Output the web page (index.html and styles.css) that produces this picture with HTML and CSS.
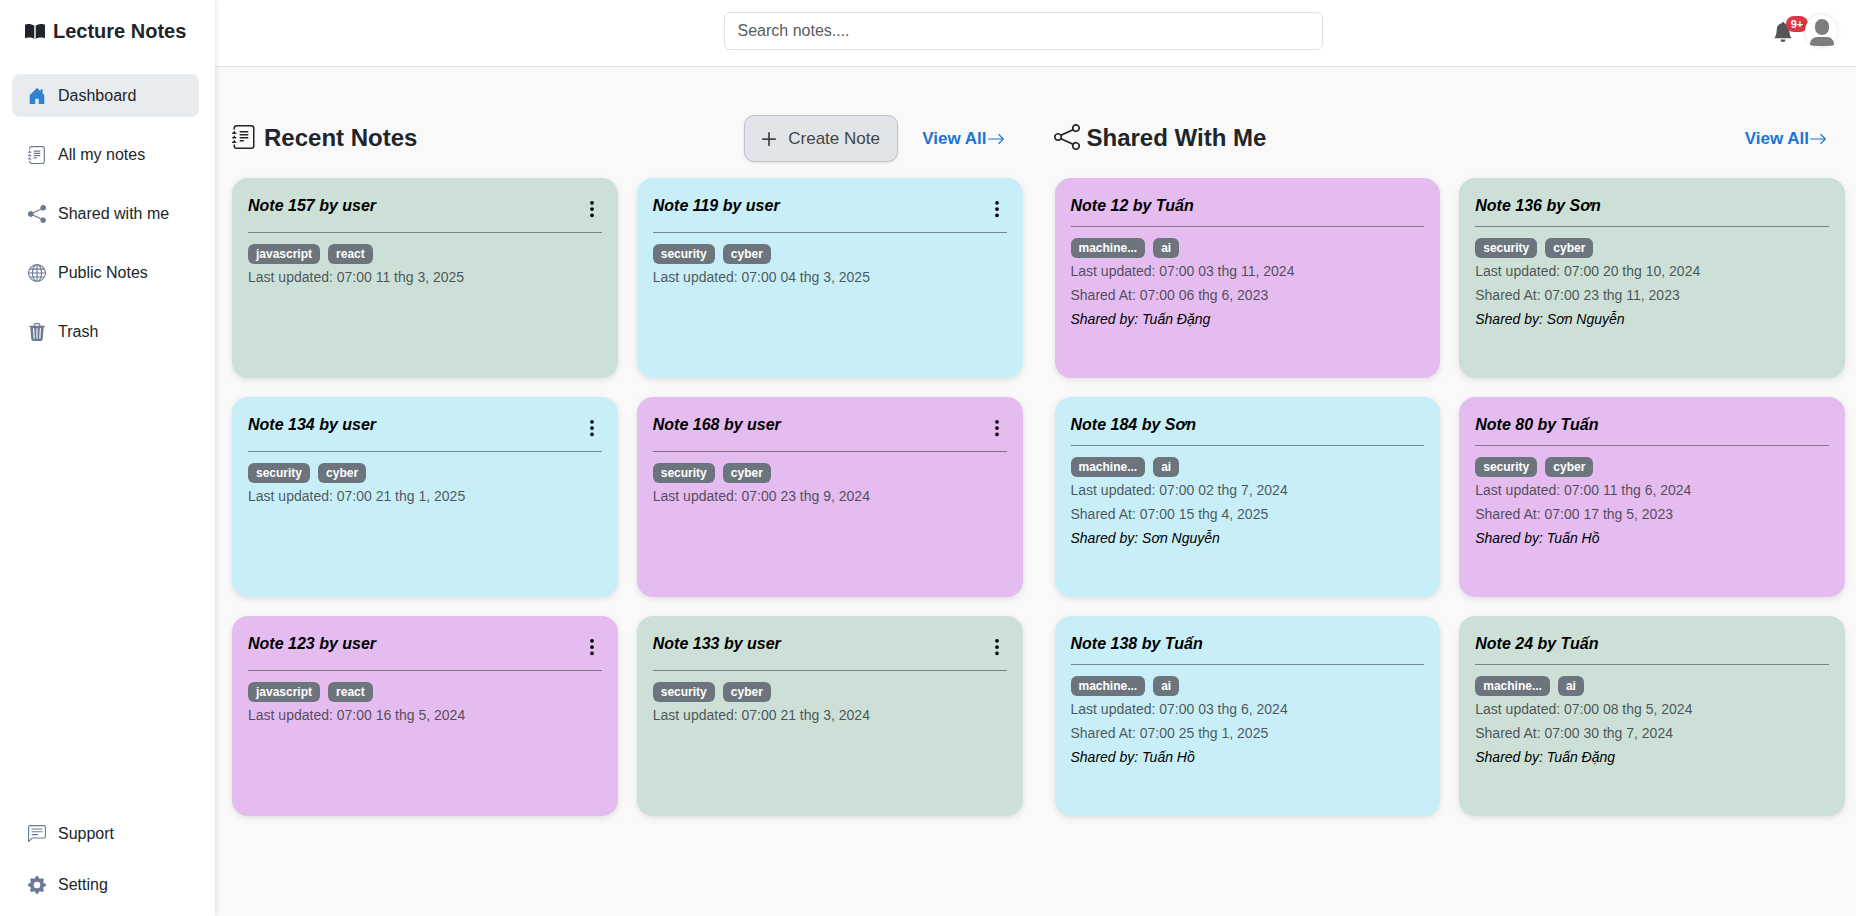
FILE: index.html
```html
<!DOCTYPE html>
<html>
<head>
    <meta charset="utf-8" />
    <title>Lecture Notes</title>
    <link rel="stylesheet" href="styles.css">
</head>
<body>
    <svg class="icon-defs" xmlns="http://www.w3.org/2000/svg">
        <symbol id="i-book" viewBox="0 0 20 15"><path d="M9.3 1.6C7.8.5 5.5 0 3.4 0 2 0 .8.3 0 .7v13.6c1-.5 2.2-.8 3.6-.8 2.2 0 4.3.5 5.7 1.4z"/><path d="M10.7 1.6C12.2.5 14.5 0 16.6 0c1.4 0 2.6.3 3.4.7v13.6c-1-.5-2.2-.8-3.6-.8-2.2 0-4.3.5-5.7 1.4z"/></symbol>
        <symbol id="i-house" viewBox="0 0 16 16"><path d="M6.5 14.5v-3.505c0-.245.25-.495.5-.495h2c.25 0 .5.25.5.5v3.5a.5.5 0 0 0 .5.5h4a.5.5 0 0 0 .5-.5v-7a.5.5 0 0 0-.146-.354L13 5.793V2.5a.5.5 0 0 0-.5-.5h-1a.5.5 0 0 0-.5.5v1.293L8.354 1.146a.5.5 0 0 0-.708 0l-6 6A.5.5 0 0 0 1.5 7.5v7a.5.5 0 0 0 .5.5h4a.5.5 0 0 0 .5-.5"/></symbol>
        <symbol id="i-journal" viewBox="0 0 16 16"><path d="M5 10.5a.5.5 0 0 1 .5-.5h2a.5.5 0 0 1 0 1h-2a.5.5 0 0 1-.5-.5m0-2a.5.5 0 0 1 .5-.5h5a.5.5 0 0 1 0 1h-5a.5.5 0 0 1-.5-.5m0-2a.5.5 0 0 1 .5-.5h5a.5.5 0 0 1 0 1h-5a.5.5 0 0 1-.5-.5m0-2a.5.5 0 0 1 .5-.5h5a.5.5 0 0 1 0 1h-5a.5.5 0 0 1-.5-.5"/><path d="M3 0h10a2 2 0 0 1 2 2v12a2 2 0 0 1-2 2H3a2 2 0 0 1-2-2v-1h1v1a1 1 0 0 0 1 1h10a1 1 0 0 0 1-1V2a1 1 0 0 0-1-1H3a1 1 0 0 0-1 1v1H1V2a2 2 0 0 1 2-2"/><path d="M1 5v-.5a.5.5 0 0 1 1 0V5h.5a.5.5 0 0 1 0 1h-2a.5.5 0 0 1 0-1zm0 3v-.5a.5.5 0 0 1 1 0V8h.5a.5.5 0 0 1 0 1h-2a.5.5 0 0 1 0-1zm0 3v-.5a.5.5 0 0 1 1 0v.5h.5a.5.5 0 0 1 0 1h-2a.5.5 0 0 1 0-1z"/></symbol>
        <symbol id="i-share-fill" viewBox="0 0 16 16"><path d="M11 2.5a2.5 2.5 0 1 1 .603 1.628l-6.718 3.12a2.5 2.5 0 0 1 0 1.504l6.718 3.12a2.5 2.5 0 1 1-.488.876l-6.718-3.12a2.5 2.5 0 1 1 0-3.256l6.718-3.12A2.5 2.5 0 0 1 11 2.5"/></symbol>
        <symbol id="i-share" viewBox="0 0 16 16"><path d="M13.5 1a1.5 1.5 0 1 0 0 3 1.5 1.5 0 0 0 0-3M11 2.5a2.5 2.5 0 1 1 .603 1.628l-6.718 3.12a2.5 2.5 0 0 1 0 1.504l6.718 3.12a2.5 2.5 0 1 1-.488.876l-6.718-3.12a2.5 2.5 0 1 1 0-3.256l6.718-3.12A2.5 2.5 0 0 1 11 2.5m-8.5 4a1.5 1.5 0 1 0 0 3 1.5 1.5 0 0 0 0-3m11 5.5a1.5 1.5 0 1 0 0 3 1.5 1.5 0 0 0 0-3"/></symbol>
        <symbol id="i-globe" viewBox="0 0 16 16"><path d="M0 8a8 8 0 1 1 16 0A8 8 0 0 1 0 8m7.5-6.923c-.67.204-1.335.82-1.887 1.855A8 8 0 0 0 5.145 4H7.5zM4.09 4a9.3 9.3 0 0 1 .64-1.539 7 7 0 0 1 .597-.933A7.03 7.03 0 0 0 2.255 4zm-.582 3.5c.03-.877.138-1.718.312-2.5H1.674a7 7 0 0 0-.656 2.5zM4.847 5a12.5 12.5 0 0 0-.338 2.5H7.5V5zM8.5 5v2.5h2.99a12.5 12.5 0 0 0-.337-2.5zM4.51 8.5a12.5 12.5 0 0 0 .337 2.5H7.5V8.5zm3.99 0V11h2.653c.187-.765.306-1.608.338-2.5zM5.145 12q.208.58.468 1.068c.552 1.035 1.218 1.65 1.887 1.855V12zm.182 2.472a7 7 0 0 1-.597-.933A9.3 9.3 0 0 1 4.09 12H2.255a7 7 0 0 0 3.072 2.472M3.82 11a13.7 13.7 0 0 1-.312-2.5h-2.49c.062.89.291 1.733.656 2.5zm6.853 3.472A7 7 0 0 0 13.745 12H11.91a9.3 9.3 0 0 1-.64 1.539 7 7 0 0 1-.597.933M8.5 12v2.923c.67-.204 1.335-.82 1.887-1.855q.26-.487.468-1.068zm3.68-1h2.146c.365-.767.594-1.61.656-2.5h-2.49a13.7 13.7 0 0 1-.312 2.5m2.802-3.5a7 7 0 0 0-.656-2.5H12.18c.174.782.282 1.623.312 2.5zM11.27 2.461c.247.464.462.98.64 1.539h1.835a7 7 0 0 0-3.072-2.472c.218.284.418.598.597.933M10.855 4a8 8 0 0 0-.468-1.068C9.835 1.897 9.17 1.282 8.5 1.077V4z"/></symbol>
        <symbol id="i-trash" viewBox="0 0 16 16"><path d="M11 1.5v1h3.5a.5.5 0 0 1 0 1h-.538l-.853 10.66A2 2 0 0 1 11.115 16h-6.23a2 2 0 0 1-1.994-1.84L2.038 3.5H1.5a.5.5 0 0 1 0-1H5v-1A1.5 1.5 0 0 1 6.5 0h3A1.5 1.5 0 0 1 11 1.5m-5 0v1h4v-1a.5.5 0 0 0-.5-.5h-3a.5.5 0 0 0-.5.5M4.5 5.029l.5 8.5a.5.5 0 1 0 .998-.06l-.5-8.5a.5.5 0 1 0-.998.06m6.53-.528a.5.5 0 0 0-.528.47l-.5 8.5a.5.5 0 0 0 .998.058l.5-8.5a.5.5 0 0 0-.47-.528M8 4.5a.5.5 0 0 0-.5.5v8.5a.5.5 0 0 0 1 0V5a.5.5 0 0 0-.5-.5"/></symbol>
        <symbol id="i-chat" viewBox="0 0 16 16"><path d="M14 1a1 1 0 0 1 1 1v8a1 1 0 0 1-1 1H4.414A2 2 0 0 0 3 11.586l-2 2V2a1 1 0 0 1 1-1zM2 0a2 2 0 0 0-2 2v12.793a.5.5 0 0 0 .854.353l2.853-2.853A1 1 0 0 1 4.414 12H14a2 2 0 0 0 2-2V2a2 2 0 0 0-2-2z"/><path d="M3 3.5a.5.5 0 0 1 .5-.5h9a.5.5 0 0 1 0 1h-9a.5.5 0 0 1-.5-.5M3 6a.5.5 0 0 1 .5-.5h9a.5.5 0 0 1 0 1h-9A.5.5 0 0 1 3 6m0 2.5a.5.5 0 0 1 .5-.5h5a.5.5 0 0 1 0 1h-5a.5.5 0 0 1-.5-.5"/></symbol>
        <symbol id="i-gear" viewBox="0 0 16 16"><path d="M9.405 1.05c-.413-1.4-2.397-1.4-2.81 0l-.1.34a1.464 1.464 0 0 1-2.105.872l-.31-.17c-1.283-.698-2.686.705-1.987 1.987l.169.311c.446.82.023 1.841-.872 2.105l-.34.1c-1.4.413-1.4 2.397 0 2.81l.34.1a1.464 1.464 0 0 1 .872 2.105l-.17.31c-.698 1.283.705 2.686 1.987 1.987l.311-.169a1.464 1.464 0 0 1 2.105.872l.1.34c.413 1.4 2.397 1.4 2.81 0l.1-.34a1.464 1.464 0 0 1 2.105-.872l.31.17c1.283.698 2.686-.705 1.987-1.987l-.169-.311a1.464 1.464 0 0 1 .872-2.105l.34-.1c1.4-.413 1.4-2.397 0-2.81l-.34-.1a1.464 1.464 0 0 1-.872-2.105l.17-.31c.698-1.283-.705-2.686-1.987-1.987l-.311.169a1.464 1.464 0 0 1-2.105-.872zM8 10.93a2.929 2.929 0 1 1 0-5.86 2.929 2.929 0 0 1 0 5.858z"/></symbol>
        <symbol id="i-bell" viewBox="0 0 16 16"><path d="M8 16a2 2 0 0 0 2-2H6a2 2 0 0 0 2 2m.995-14.901a1 1 0 1 0-1.99 0A5 5 0 0 0 3 6c0 1.098-.5 6-2 7h14c-1.5-1-2-5.902-2-7 0-2.42-1.72-4.44-4.005-4.901"/></symbol>
        <symbol id="i-dots" viewBox="0 0 16 16"><path d="M9.5 13a1.5 1.5 0 1 1-3 0 1.5 1.5 0 0 1 3 0m0-5a1.5 1.5 0 1 1-3 0 1.5 1.5 0 0 1 3 0m0-5a1.5 1.5 0 1 1-3 0 1.5 1.5 0 0 1 3 0"/></symbol>
        <symbol id="i-plus" viewBox="0 0 16 16"><path d="M8 4a.5.5 0 0 1 .5.5v3h3a.5.5 0 0 1 0 1h-3v3a.5.5 0 0 1-1 0v-3h-3a.5.5 0 0 1 0-1h3v-3A.5.5 0 0 1 8 4"/></symbol>
        <symbol id="i-arrow" viewBox="0 0 16 16"><path d="M1 8a.5.5 0 0 1 .5-.5h11.793l-3.147-3.146a.5.5 0 0 1 .708-.708l4 4a.5.5 0 0 1 0 .708l-4 4a.5.5 0 0 1-.708-.708L13.293 8.5H1.5A.5.5 0 0 1 1 8"/></symbol>
    </svg>

    <div class="app">
        <aside class="sidebar">
            <div class="brand">
                <svg class="brand-icon"><use href="#i-book"/></svg>
                <span>Lecture Notes</span>
            </div>
            <nav class="nav-main">
                <a class="nav-item active"><svg class="nav-icon"><use href="#i-house"/></svg>Dashboard</a>
                <a class="nav-item"><svg class="nav-icon"><use href="#i-journal"/></svg>All my notes</a>
                <a class="nav-item"><svg class="nav-icon"><use href="#i-share-fill"/></svg>Shared with me</a>
                <a class="nav-item"><svg class="nav-icon"><use href="#i-globe"/></svg>Public Notes</a>
                <a class="nav-item"><svg class="nav-icon"><use href="#i-trash"/></svg>Trash</a>
            </nav>
            <nav class="nav-bottom">
                <a class="nav-item"><svg class="nav-icon"><use href="#i-chat"/></svg>Support</a>
                <a class="nav-item"><svg class="nav-icon"><use href="#i-gear"/></svg>Setting</a>
            </nav>
        </aside>

        <div class="page">
            <header class="topbar">
                <input class="search" type="text" placeholder="Search notes....">
                <div class="topbar-right">
                    <div class="bell">
                        <svg class="bell-icon"><use href="#i-bell"/></svg>
                        <span class="bell-badge">9+</span>
                    </div>
                    <div class="avatar">
                        <svg viewBox="0 0 32 32" width="32" height="32">
                            <rect x="10" y="4" width="14" height="16" rx="7" fill="#7d7d7d"/>
                            <path d="M5 30c0-5 3-8 7-8h10c4 0 7 3 7 8-4 1.5-20 1.5-24 0z" fill="#7d7d7d"/>
                        </svg>
                    </div>
                </div>
            </header>

            <main class="content">
                <section class="section section-recent">
                    <div class="section-head">
                        <svg class="section-icon"><use href="#i-journal"/></svg>
                        <h2>Recent Notes</h2>
                        <button class="create-btn"><svg class="plus-icon"><use href="#i-plus"/></svg>Create Note</button>
                        <a class="view-all">View All<svg class="arrow-icon"><use href="#i-arrow"/></svg></a>
                    </div>
                    <div class="note-grid">
                        <div class="note green">
                            <div class="note-head"><div class="note-title">Note 157 by user</div><svg class="dots"><use href="#i-dots"/></svg></div>
                            <div class="tags"><span class="tag">javascript</span><span class="tag">react</span></div>
                            <div class="note-line">Last updated: 07:00 11 thg 3, 2025</div>
                        </div>
                        <div class="note blue">
                            <div class="note-head"><div class="note-title">Note 119 by user</div><svg class="dots"><use href="#i-dots"/></svg></div>
                            <div class="tags"><span class="tag">security</span><span class="tag">cyber</span></div>
                            <div class="note-line">Last updated: 07:00 04 thg 3, 2025</div>
                        </div>
                        <div class="note blue">
                            <div class="note-head"><div class="note-title">Note 134 by user</div><svg class="dots"><use href="#i-dots"/></svg></div>
                            <div class="tags"><span class="tag">security</span><span class="tag">cyber</span></div>
                            <div class="note-line">Last updated: 07:00 21 thg 1, 2025</div>
                        </div>
                        <div class="note purple">
                            <div class="note-head"><div class="note-title">Note 168 by user</div><svg class="dots"><use href="#i-dots"/></svg></div>
                            <div class="tags"><span class="tag">security</span><span class="tag">cyber</span></div>
                            <div class="note-line">Last updated: 07:00 23 thg 9, 2024</div>
                        </div>
                        <div class="note purple">
                            <div class="note-head"><div class="note-title">Note 123 by user</div><svg class="dots"><use href="#i-dots"/></svg></div>
                            <div class="tags"><span class="tag">javascript</span><span class="tag">react</span></div>
                            <div class="note-line">Last updated: 07:00 16 thg 5, 2024</div>
                        </div>
                        <div class="note green">
                            <div class="note-head"><div class="note-title">Note 133 by user</div><svg class="dots"><use href="#i-dots"/></svg></div>
                            <div class="tags"><span class="tag">security</span><span class="tag">cyber</span></div>
                            <div class="note-line">Last updated: 07:00 21 thg 3, 2024</div>
                        </div>
                    </div>
                </section>

                <section class="section section-shared">
                    <div class="section-head">
                        <svg class="section-icon"><use href="#i-share"/></svg>
                        <h2>Shared With Me</h2>
                        <a class="view-all">View All<svg class="arrow-icon"><use href="#i-arrow"/></svg></a>
                    </div>
                    <div class="note-grid">
                        <div class="note purple">
                            <div class="note-head"><div class="note-title">Note 12 by Tuấn</div></div>
                            <div class="tags"><span class="tag">machine...</span><span class="tag">ai</span></div>
                            <div class="note-line">Last updated: 07:00 03 thg 11, 2024</div>
                            <div class="note-line">Shared At: 07:00 06 thg 6, 2023</div>
                            <div class="note-line shared-by">Shared by: Tuấn Đặng</div>
                        </div>
                        <div class="note green">
                            <div class="note-head"><div class="note-title">Note 136 by Sơn</div></div>
                            <div class="tags"><span class="tag">security</span><span class="tag">cyber</span></div>
                            <div class="note-line">Last updated: 07:00 20 thg 10, 2024</div>
                            <div class="note-line">Shared At: 07:00 23 thg 11, 2023</div>
                            <div class="note-line shared-by">Shared by: Sơn Nguyễn</div>
                        </div>
                        <div class="note blue">
                            <div class="note-head"><div class="note-title">Note 184 by Sơn</div></div>
                            <div class="tags"><span class="tag">machine...</span><span class="tag">ai</span></div>
                            <div class="note-line">Last updated: 07:00 02 thg 7, 2024</div>
                            <div class="note-line">Shared At: 07:00 15 thg 4, 2025</div>
                            <div class="note-line shared-by">Shared by: Sơn Nguyễn</div>
                        </div>
                        <div class="note purple">
                            <div class="note-head"><div class="note-title">Note 80 by Tuấn</div></div>
                            <div class="tags"><span class="tag">security</span><span class="tag">cyber</span></div>
                            <div class="note-line">Last updated: 07:00 11 thg 6, 2024</div>
                            <div class="note-line">Shared At: 07:00 17 thg 5, 2023</div>
                            <div class="note-line shared-by">Shared by: Tuấn Hồ</div>
                        </div>
                        <div class="note blue">
                            <div class="note-head"><div class="note-title">Note 138 by Tuấn</div></div>
                            <div class="tags"><span class="tag">machine...</span><span class="tag">ai</span></div>
                            <div class="note-line">Last updated: 07:00 03 thg 6, 2024</div>
                            <div class="note-line">Shared At: 07:00 25 thg 1, 2025</div>
                            <div class="note-line shared-by">Shared by: Tuấn Hồ</div>
                        </div>
                        <div class="note green">
                            <div class="note-head"><div class="note-title">Note 24 by Tuấn</div></div>
                            <div class="tags"><span class="tag">machine...</span><span class="tag">ai</span></div>
                            <div class="note-line">Last updated: 07:00 08 thg 5, 2024</div>
                            <div class="note-line">Shared At: 07:00 30 thg 7, 2024</div>
                            <div class="note-line shared-by">Shared by: Tuấn Đặng</div>
                        </div>
                    </div>
                </section>
            </main>
        </div>
    </div>
</body>
</html>
```

FILE: styles.css
```css
* {
    box-sizing: border-box;
}

body {
    margin: 0;
    height: 916px;
    overflow: hidden;
    font-family: "Liberation Sans", Arial, sans-serif;
    font-size: 16px;
    line-height: 1.5;
    color: #212529;
    background: #f9f9f9;
}

.icon-defs {
    display: none;
}

.app {
    display: flex;
    height: 100%;
}

/* sidebar */
.sidebar {
    display: flex;
    flex-direction: column;
    flex: 0 0 215px;
    padding: 0 16px 0 12px;
    background: #fff;
    box-shadow: 0 0 6px rgba(0, 0, 0, .15);
    z-index: 2;
}

.brand {
    display: flex;
    align-items: center;
    gap: 8px;
    height: 62px;
    padding-left: 13px;
    font-size: 20px;
    font-weight: 700;
}

.brand-icon {
    width: 20px;
    height: 15px;
    fill: #212529;
}

.nav-main {
    display: flex;
    flex-direction: column;
    gap: 16px;
    margin-top: 12px;
}

.nav-bottom {
    display: flex;
    flex-direction: column;
    gap: 8px;
    margin-top: auto;
    margin-bottom: 10px;
}

.nav-item {
    display: flex;
    align-items: center;
    gap: 12px;
    height: 43px;
    padding-left: 16px;
    border-radius: 8px;
    color: #212529;
}

.nav-item.active {
    background: #e9ecef;
}

.nav-icon {
    width: 18px;
    height: 18px;
    fill: #6b7a90;
}

.nav-item.active .nav-icon {
    fill: #3182ce;
}

/* top bar */
.page {
    flex: 1;
    min-width: 0;
}

.topbar {
    display: flex;
    justify-content: center;
    align-items: center;
    position: relative;
    height: 67px;
    padding-bottom: 4px;
    background: #fff;
    border-bottom: 1px solid #dee2e6;
}

.search {
    width: 599px;
    height: 38px;
    margin-right: 25px;
    padding: 6px 13px;
    font: inherit;
    border: 1px solid #dee2e6;
    border-radius: 6px;
    background: #fff;
}

.search::placeholder {
    color: #595c5f;
}

.topbar-right {
    display: flex;
    align-items: center;
    position: absolute;
    top: 15px;
    right: 19px;
}

.bell {
    position: relative;
    width: 32px;
    height: 32px;
}

.bell-icon {
    position: absolute;
    top: 7px;
    left: 0;
    width: 20px;
    height: 20px;
    fill: #555;
}

.bell-badge {
    position: absolute;
    top: 1px;
    left: 13px;
    width: 22px;
    height: 16px;
    border-radius: 8px;
    background: #dc3545;
    color: #fff;
    font-size: 11px;
    font-weight: 700;
    line-height: 16px;
    text-align: center;
}

.avatar {
    width: 32px;
    height: 32px;
    border-radius: 50%;
    background: #fff;
    box-shadow: 0 0 5px rgba(0, 0, 0, .12);
    z-index: 1;
}

/* sections */
.content {
    display: flex;
    gap: 32px;
    padding: 48px 11px 0 17px;
}

.section {
    flex: 1;
    min-width: 0;
}

.section-head {
    display: flex;
    align-items: center;
    height: 47px;
    margin-bottom: 16px;
}

.section-head h2 {
    margin: 0;
    font-size: 24px;
    font-weight: 700;
    line-height: 1.2;
}

.section-icon {
    width: 24px;
    height: 24px;
    margin-right: 8px;
    margin-bottom: 3px;
    fill: #212529;
}

.section-shared .section-icon {
    width: 26px;
    height: 26px;
    margin-left: -1px;
    margin-right: 7px;
}

.create-btn {
    display: flex;
    align-items: center;
    gap: 5px;
    width: 154px;
    height: 47px;
    margin-left: auto;
    padding: 0 0 0 10px;
    font: inherit;
    font-size: 17px;
    color: #444;
    background: #e1e4e9;
    border: 1px solid #bfc3c9;
    border-radius: 10px;
    box-shadow: 0 1px 3px rgba(0, 0, 0, .1);
}

.plus-icon {
    width: 28px;
    height: 28px;
    fill: #444;
}

.view-all {
    display: flex;
    align-items: center;
    margin-left: 24px;
    margin-right: 18px;
    font-size: 17px;
    font-weight: 700;
    color: #1976d2;
}

.section-shared .view-all {
    margin-left: auto;
}

.arrow-icon {
    width: 18px;
    height: 18px;
    fill: #1976d2;
}

/* note cards */
.note-grid {
    display: grid;
    grid-template-columns: 1fr 1fr;
    grid-auto-rows: 200px;
    gap: 19px;
}

.note {
    padding: 16px;
    border-radius: 16px;
    box-shadow: 0 2px 6px rgba(0, 0, 0, .1);
}

.green {
    background: #cce0d7;
}

.blue {
    background: #c8eef7;
}

.purple {
    background: #e4bcf0;
}

.note-head {
    display: flex;
    justify-content: space-between;
    padding-bottom: 8px;
    border-bottom: 1px solid rgba(33, 37, 41, .5);
    margin-bottom: 11px;
}

.note-title {
    font-weight: 700;
    font-style: italic;
    color: #000;
}

.dots {
    width: 20px;
    height: 30px;
    padding: 5px 0;
    margin-right: 0;
    fill: #000;
}

.tags {
    display: flex;
    gap: 8px;
    margin-bottom: 1px;
}

.tag {
    height: 20px;
    padding: 0 8px;
    border-radius: 6px;
    background: #6c757d;
    color: #fff;
    font-size: 12px;
    font-weight: 700;
    line-height: 20px;
}

.note-line {
    font-size: 14px;
    line-height: 24px;
    color: rgba(33, 37, 41, .75);
}

.shared-by {
    font-style: italic;
    color: #000;
}
```
